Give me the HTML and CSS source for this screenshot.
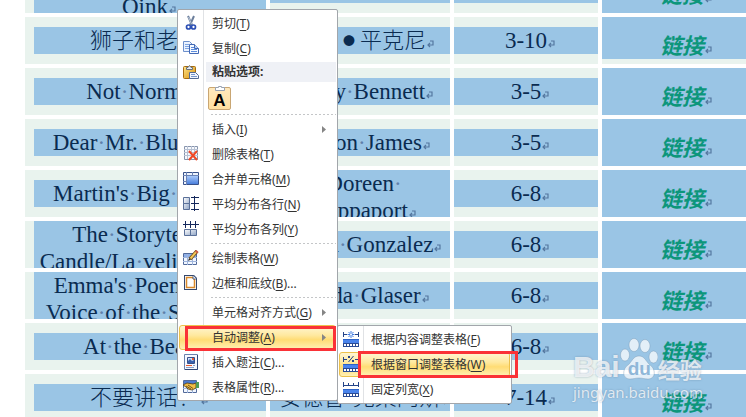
FILE: index.html
```html
<!DOCTYPE html>
<html lang="zh-CN">
<head>
<meta charset="utf-8">
<title>自动调整表格</title>
<link rel="stylesheet" href="styles.css">
</head>
<body>
<svg class="defs" aria-hidden="true">
  <symbol id="mark" viewBox="0 0 8 8"><path d="M4 1h3v4H2M4 3L2 5l2 2" fill="none" stroke="#54779f" stroke-width="1.200"/></symbol>
  <linearGradient id="blue" x2="0" y2="1"><stop stop-color="#a9c9fb"/><stop offset="1" stop-color="#4a7fdc"/></linearGradient>
  <linearGradient id="steel" x2="1" y2="1"><stop stop-color="#fff"/><stop offset="1" stop-color="#8ea3c4"/></linearGradient>
  <linearGradient id="gold" x2="1" y2="1"><stop stop-color="#ffe48a"/><stop offset="1" stop-color="#d8920c"/></linearGradient>
  <symbol id="ruler" viewBox="0 0 16 8"><path d="M0 0h16v4H0z" fill="#4a84ec"/><path d="M0 .5h16" stroke="#2c62c8"/><path d="M0 4h16v4H0z" fill="#2a4a94"/><path d="M1 5h2v2H1zM4 5h2v2H4zM7 5h2v2H7zM10 5h2v2h-2zM13 5h2v2h-2z" fill="#fff"/></symbol>
</svg>

<main class="page">
  <table class="books">
    <colgroup><col class="c-title"><col class="c-author"><col class="c-age"><col></colgroup>
    <tbody>
    <tr>
      <td><div class="band tall">Click,<i>·</i>Clack<br>Oink<svg class="mark"><use href="#mark"/></svg></div></td>
      <td><div class="band">&nbsp;</div></td>
      <td><div class="band">&nbsp;</div></td>
      <td><div class="band link"><a href="#">链接</a><svg class="mark"><use href="#mark"/></svg></div></td>
    </tr>
    <tr>
      <td><div class="band"><span class="cjk">狮子和老鼠</span><svg class="mark"><use href="#mark"/></svg></div></td>
      <td><div class="band"><span class="cjk">大卫<b class="dot">●</b>平克尼</span><svg class="mark"><use href="#mark"/></svg></div></td>
      <td><div class="band">3-10<svg class="mark"><use href="#mark"/></svg></div></td>
      <td class="top"><div class="band link short"><a href="#">链接</a><svg class="mark"><use href="#mark"/></svg></div></td>
    </tr>
    <tr>
      <td><div class="band">Not<i>·</i>Norman<svg class="mark"><use href="#mark"/></svg></div></td>
      <td><div class="band">Kelly<i>·</i>Bennett<svg class="mark"><use href="#mark"/></svg></div></td>
      <td><div class="band">3-5<svg class="mark"><use href="#mark"/></svg></div></td>
      <td><div class="band link"><a href="#">链接</a><svg class="mark"><use href="#mark"/></svg></div></td>
    </tr>
    <tr>
      <td><div class="band">Dear<i>·</i>Mr.<i>·</i>Blueberry<svg class="mark"><use href="#mark"/></svg></div></td>
      <td><div class="band">Simon<i>·</i>James<svg class="mark"><use href="#mark"/></svg></div></td>
      <td><div class="band">3-5<svg class="mark"><use href="#mark"/></svg></div></td>
      <td><div class="band link"><a href="#">链接</a><svg class="mark"><use href="#mark"/></svg></div></td>
    </tr>
    <tr>
      <td><div class="band">Martin's<i>·</i>Big<i>·</i>Words<svg class="mark"><use href="#mark"/></svg></div></td>
      <td><div class="band tall">Doreen<i>·</i><br>Rappaport<svg class="mark"><use href="#mark"/></svg></div></td>
      <td><div class="band">6-8<svg class="mark"><use href="#mark"/></svg></div></td>
      <td><div class="band link"><a href="#">链接</a><svg class="mark"><use href="#mark"/></svg></div></td>
    </tr>
    <tr>
      <td><div class="band tall">The<i>·</i>Storyteller's<br>Candle/La<i>·</i>velita<i>·</i>de<i>·</i>los</div></td>
      <td><div class="band">Lucía<i>·</i>Gonzalez<svg class="mark"><use href="#mark"/></svg></div></td>
      <td><div class="band">6-8<svg class="mark"><use href="#mark"/></svg></div></td>
      <td><div class="band link"><a href="#">链接</a><svg class="mark"><use href="#mark"/></svg></div></td>
    </tr>
    <tr>
      <td><div class="band tall">Emma's<i>·</i>Poem:<i>·</i>The<i>·</i><br>Voice<i>·</i>of<i>·</i>the<i>·</i>Statue<i>·</i>of</div></td>
      <td><div class="band">Linda<i>·</i>Glaser<svg class="mark"><use href="#mark"/></svg></div></td>
      <td><div class="band">6-8<svg class="mark"><use href="#mark"/></svg></div></td>
      <td><div class="band link"><a href="#">链接</a><svg class="mark"><use href="#mark"/></svg></div></td>
    </tr>
    <tr>
      <td><div class="band">At<i>·</i>the<i>·</i>Beach<svg class="mark"><use href="#mark"/></svg></div></td>
      <td><div class="band">Huy<i>·</i>Voun<i>·</i>Lee<svg class="mark"><use href="#mark"/></svg></div></td>
      <td><div class="band">6-8<svg class="mark"><use href="#mark"/></svg></div></td>
      <td><div class="band link"><a href="#">链接</a><svg class="mark"><use href="#mark"/></svg></div></td>
    </tr>
    <tr>
      <td><div class="band"><span class="cjk">不要讲话！</span><svg class="mark"><use href="#mark"/></svg></div></td>
      <td><div class="band"><span class="cjk">安德鲁</span><i>·</i><span class="cjk">克莱门斯</span><svg class="mark"><use href="#mark"/></svg></div></td>
      <td><div class="band">7-14<svg class="mark"><use href="#mark"/></svg></div></td>
      <td><div class="band link"><a href="#">链接</a><svg class="mark"><use href="#mark"/></svg></div></td>
    </tr>
    </tbody>
  </table>
</main>

<nav class="menu context" aria-label="表格">
  <button class="item"><svg class="icon" viewBox="0 0 16 16"><path d="M5 1l4 9M11 1L7 10" stroke="#6c7f9c" stroke-width="2"/><path d="M5.500 2l3 7" stroke="#dfe8f4" stroke-width=".7"/><circle cx="5.500" cy="12" r="2" fill="#fff" stroke="#2c4fb4" stroke-width="1.700"/><circle cx="10.500" cy="12" r="2" fill="#fff" stroke="#2c4fb4" stroke-width="1.700"/></svg><span>剪切(<u>T</u>)</span></button>
  <button class="item"><svg class="icon" viewBox="0 0 16 16"><path d="M.5 1.500h6l3 3v7h-9z" fill="#eaf2ff" stroke="#6d90cc"/><path d="M2 4.500h4M2 6.500h5M2 8.500h5" stroke="#7ea5e2"/><path d="M6.500 4.500h5l4 4v5h-9z" fill="#f6faff" stroke="#4369b4"/><path d="M11.500 4.500v4h4" fill="#bcd2f5" stroke="#4369b4"/><path d="M8 7.500h3M8 9.500h6M8 11.500h6" stroke="#5c8bdc"/></svg><span>复制(<u>C</u>)</span></button>
  <div class="heading"><svg class="icon" viewBox="0 0 16 16"><rect x=".5" y="1.500" width="12" height="12" rx="1" fill="url(#gold)" stroke="#a66b10"/><path d="M3.500 4.500v-2h1.500l1.500-2 1.500 2h1.500v2z" fill="#e8edf4" stroke="#68707c"/><path d="M6.500 7.500h6l3 3v3h-9z" fill="#f0f5fd" stroke="#526a94"/><path d="M8 9.500h4M8 11.500h6" stroke="#7796cc"/></svg><span>粘贴选项:</span></div>
  <div class="paste"><button class="keep-text" aria-label="只保留文本"><svg viewBox="0 0 10 5"><path d="M.5 4.500v-3h3v-1h3v1h3v3z" fill="#fff" stroke="#98a3b3"/></svg>A</button></div>
  <hr>
  <button class="item"><span>插入(<u>I</u>)</span><svg class="arrow" viewBox="0 0 4 7"><path d="M0 0l4 3.500-4 3.500z"/></svg></button>
  <button class="item"><svg class="icon" viewBox="0 0 16 16"><path d="M1.500.500h13v13h-13z" fill="#f7f9fd" stroke="#8794ac"/><path d="M1 3.500h14M1 6.500h14M1 9.500h14M4.500 0v13M8.500 0v13M11.500 0v13" stroke="#b7c1d3"/><path d="M6 5l8 9M14 5l-8 9" stroke="#ef4726" stroke-width="2"/></svg><span>删除表格(<u>T</u>)</span></button>
  <button class="item"><svg class="icon" viewBox="0 0 16 16"><path d="M.5 1.500h15v12H.5z" fill="#eef3fc" stroke="#38518a"/><path d="M0 4.500h16M3.500 1v13M9.500 1v4M0 10.500h4" stroke="#6a82b4"/><path d="M4 5h11v8H4z" fill="url(#blue)"/></svg><span>合并单元格(<u>M</u>)</span></button>
  <button class="item"><svg class="icon" viewBox="0 0 16 16"><path d="M.5 1.500h6v6h-6zM.5 7.500h6v6h-6z" fill="url(#steel)" stroke="#5a7099"/><path d="M8 1.500h8M8 7.500h8M8 13.500h8M11.500 0v15" stroke="#14285c"/></svg><span>平均分布各行(<u>N</u>)</span></button>
  <button class="item"><svg class="icon" viewBox="0 0 16 16"><path d="M1.500 8.500h6v6h-6zM7.500 8.500h6v6h-6z" fill="url(#steel)" stroke="#5a7099"/><path d="M0 3.500h16M2.500 0v7M7.500 0v7M12.500 0v7" stroke="#14285c"/></svg><span>平均分布各列(<u>Y</u>)</span></button>
  <hr>
  <button class="item"><svg class="icon" viewBox="0 0 16 16"><path d="M.5 3.500h13v11H.5z" fill="#f2f7ff" stroke="#526a9a"/><path d="M1 4h12v3H1z" fill="#8fb0e8"/><path d="M0 7.500h14M0 11.500h14M4.500 4v11M9.500 4v11" stroke="#9fb5dc"/><path d="M7 9l7-8" stroke="#6c4a18" stroke-width="3.600"/><path d="M7.500 8.500l6-7" stroke="#f4c95a" stroke-width="2"/><path d="M13 2.500l1.500-1.500" stroke="#cf5c48" stroke-width="3"/><path d="M5 11l1-3 2 1.500z" fill="#333"/></svg><span>绘制表格(<u>W</u>)</span></button>
  <button class="item"><svg class="icon" viewBox="0 0 16 16"><path d="M1 0h10l3 3v12H1z" fill="#34486e"/><path d="M2 1h8l3 3v10H2z" fill="#fff"/><path d="M3.500 2.500h6l2 2v8h-8z" fill="#fff" stroke="#d98a2c" stroke-width="1.500"/><path d="M10 0v4h4z" fill="#dce5f5" stroke="#34486e" stroke-width=".7"/></svg><span>边框和底纹(<u>B</u>)...</span></button>
  <hr>
  <button class="item"><span>单元格对齐方式(<u>G</u>)</span><svg class="arrow" viewBox="0 0 4 7"><path d="M0 0l4 3.500-4 3.500z"/></svg></button>
  <button class="item active"><span>自动调整(<u>A</u>)</span><svg class="arrow" viewBox="0 0 4 7"><path d="M0 0l4 3.500-4 3.500z"/></svg></button>
  <button class="item"><svg class="icon" viewBox="0 0 16 16"><path d="M1.500.5h13v15h-13z" fill="#f6f9ff" stroke="#6b82ad"/><path d="M14.500 1v14.500H2" fill="none" stroke="#2f4678"/><path d="M4.500 3.500h7v6h-7z" fill="#cfe0fb" stroke="#38518a"/><path d="M5 9V7l2-2 2 2 2-1v3z" fill="#3a62ae"/><path d="M9 4h2v2H9z" fill="#e5562e"/><path d="M3 11.500h6" stroke="#e5562e"/><path d="M3 13.500h8M10 11.500h2" stroke="#8aa0c8"/></svg><span>插入题注(<u>C</u>)...</span></button>
  <button class="item"><svg class="icon" viewBox="0 0 16 16"><path d="M.5 1.500h13v12H.5z" fill="#f2f7ff" stroke="#526a9a"/><path d="M1 2h12v3H1z" fill="#4c7bd0"/><path d="M0 9.500h14M4.500 5v9M9.500 5v9" stroke="#9fb5dc"/><path d="M0 6l4-2 6 1 3-1v5l-4 2-4-1-2-2z" fill="#f2bd45" stroke="#513c14" stroke-width=".8"/><path d="M3 7l5 3M5 6l5 3.500" stroke="#513c14" stroke-width=".8"/><path d="M13 3h3v6h-3z" fill="#4f9c54"/></svg><span>表格属性(<u>R</u>)...</span></button>
</nav>

<nav class="menu sub" aria-label="自动调整">
  <button class="item"><svg class="icon" viewBox="0 0 16 16"><path d="M.5 1v5M15.500 1v5M0 3.500h4M12 3.500h4" stroke="#244488"/><path d="M8 0v7M4.500 3.500h7M5.500 1l5 5M10.500 1l-5 5" stroke="#3f7ae0"/><circle cx="8" cy="3.500" r="1" fill="#fff"/><use href="#ruler" y="8" width="16" height="8"/></svg><span>根据内容调整表格(<u>F</u>)</span></button>
  <button class="item active"><svg class="icon" viewBox="0 0 16 16"><path d="M.5 1v5M15.500 1v5M0 3.500h4M12 3.500h4" stroke="#244488"/><path d="M5.500 6l5-6" stroke="#244488"/><path d="M5 0h2v2H5zM9 4h2v2H9z" fill="#244488"/><use href="#ruler" y="8" width="16" height="8"/></svg><span>根据窗口调整表格(<u>W</u>)</span></button>
  <button class="item"><svg class="icon" viewBox="0 0 16 16"><path d="M.5 1v5M5.500 2v3M10.500 2v3M15.500 1v5M0 4.500h16" stroke="#244488"/><use href="#ruler" y="8" width="16" height="8"/></svg><span>固定列宽(<u>X</u>)</span></button>
</nav>

<div class="callout first"></div>
<div class="callout second"></div>

<div class="watermark">
  <div class="brand"><span>Bai</span><span class="paw"><svg viewBox="0 0 38 42"><ellipse cx="5" cy="17" rx="4.500" ry="6"/><ellipse cx="14" cy="7" rx="5" ry="6.500"/><ellipse cx="25" cy="8" rx="5" ry="6.500"/><ellipse cx="33.500" cy="19" rx="4.500" ry="6"/><path d="M19 18c6 0 7 6 11 9 6 4 6 14-2 14-4 0-5-1-9-1s-5 1-9 1c-8 0-8-10-2-14 4-3 5-9 11-9z"/></svg><em>du</em></span><span class="exp">经验</span></div>
  <div class="site">jingyan.baidu.com</div>
</div>
</body>
</html>
```
FILE: styles.css
```css
* { box-sizing: border-box; }

body {
  margin: 0;
  background: #fff;
  overflow: hidden;
  font-family: "Liberation Serif", "Noto Sans CJK SC", serif;
}

.defs { position: absolute; width: 0; height: 0; }

.page {
  height: 100vh;
  overflow: hidden;
  padding-left: 21px;
}

/* document table */
.books {
  width: calc(100% + 4px);
  margin-top: -38px;
  table-layout: fixed;
  border-collapse: separate;
  border-spacing: 4px;
  font-size: 23px;
  line-height: 27px;
  color: #0a2b50;
}
.c-title { width: 241px; }
.c-author { width: 180px; }
.c-age { width: 144px; }

.books td {
  height: 47px;
  padding: 0;
  background: #e9f3ee;
  vertical-align: middle;
}
.books td:first-child { padding-left: 9px; }
.books td.top { vertical-align: top; }

.band {
  height: 27px;
  padding-left: 8px;
  overflow: hidden;
  background: #9ac5e5;
  text-align: center;
  white-space: nowrap;
}
td:first-child .band { padding: 0 2px 0 0; }
.band.tall { height: 47px; }
.band i { font-style: normal; color: #5f80aa; }

.cjk {
  font-family: "Noto Sans CJK SC", sans-serif;
  font-size: 22px;
  font-weight: 300;
  line-height: 1;
}
.dot { display: inline-block; width: 22px; font-size: 12px; vertical-align: 2px; }

.mark { width: 8px; height: 8px; }

.band.link {
  height: 47px;
  padding: 14px 0 0 24px;
}
.band.link.short { height: 42px; }
.link a {
  font: italic bold 22px/27px "Noto Sans CJK SC", sans-serif;
  color: #0c967b;
  text-decoration: none;
}

/* menus */
.menu {
  position: absolute;
  padding: 1px 1px 0;
  border: 1px solid #a2a6ab;
  border-radius: 2px;
  background: linear-gradient(90deg, #fff 25px, #e0e2e5 25px, #e0e2e5 26px, #fff 26px);
  font: 12px/24px "Noto Sans", "Noto Sans CJK SC", sans-serif;
  color: #333;
}
.context { left: 177px; top: 9px; width: 161px; }
.sub { left: 337px; top: 325px; width: 175px; padding-bottom: 1px; }

.item,
.heading {
  position: relative;
  display: flex;
  align-items: center;
  width: 100%;
  height: 25px;
  margin: 0;
  padding: 0 0 0 32px;
  border: 1px solid transparent;
  border-radius: 3px;
  background: none;
  color: inherit;
  font: inherit;
  text-align: left;
  white-space: nowrap;
}
.sub .item { padding-left: 31px; }
.item u { text-underline-offset: 2px; }
.item.active {
  border-color: #ecc14c;
  background: linear-gradient(#fff6d2, #ffe9a0 40%, #ffdc74 60%, #fff0b4);
}
.icon {
  position: absolute;
  left: 3px;
  top: 3px;
  width: 16px;
  height: 16px;
}
.arrow {
  width: 4px;
  height: 7px;
  margin-left: auto;
  margin-right: 9px;
  fill: #858585;
}
.heading {
  height: 22px;
  border-radius: 0;
  font-weight: bold;
  background: linear-gradient(#eff1f6, #eff1f6) 26px 0 no-repeat;
}

.paste { height: 30px; padding: 4px 0 0 29px; }
.keep-text {
  position: relative;
  display: block;
  width: 23px;
  height: 23px;
  padding: 3px 0 0;
  border: 1px solid #c9a673;
  border-radius: 2px;
  background: linear-gradient(#ffe9bd, #ffdfa0);
  font: bold 17px/17px "Liberation Sans", sans-serif;
  color: #000;
}
.keep-text svg {
  position: absolute;
  left: 6px;
  top: -2px;
  width: 10px;
  height: 5px;
}

.menu hr {
  height: 4px;
  margin: 0 0 0 32px;
  border: 0;
  background: repeating-linear-gradient(90deg, #c4c6c8 0 2px, transparent 2px 4px) 0 1px / 100% 1px no-repeat;
}

/* red frames around the two chosen commands */
.callout {
  position: absolute;
  border: 3px solid #fa3237;
  pointer-events: none;
}
.first { left: 185px; top: 326px; width: 151px; height: 25px; }
.second { left: 358px; top: 351px; width: 160px; height: 27px; }

/* watermark */
.watermark {
  position: absolute;
  left: 573px;
  top: 338px;
  color: rgba(255, 255, 255, .75);
  text-shadow: 0 0 2px rgba(90, 120, 150, .6);
  pointer-events: none;
}
.brand {
  display: flex;
  align-items: flex-end;
  height: 42px;
  font: bold 30px/26px "Liberation Sans", sans-serif;
}
.paw { position: relative; width: 38px; height: 42px; }
.paw svg {
  display: block;
  width: 38px;
  height: 42px;
  fill: rgba(255, 255, 255, .72);
  stroke: rgba(110, 140, 170, .35);
}
.paw em {
  position: absolute;
  left: 8px;
  bottom: 0;
  font: bold 19px/22px "Liberation Sans", sans-serif;
  color: #8fb7d8;
  text-shadow: none;
}
.exp { font: bold 22px/24px "Noto Sans CJK SC", sans-serif; }
.site { font: 15px/24px "Noto Sans", sans-serif; }
```
